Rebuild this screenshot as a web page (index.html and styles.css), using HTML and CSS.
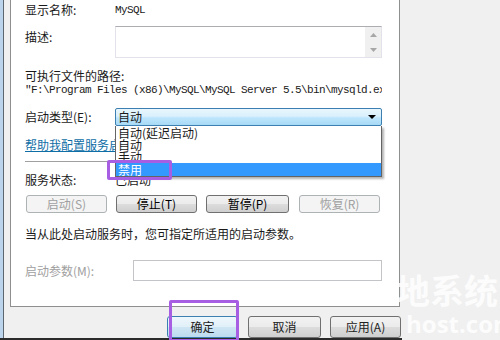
FILE: index.html
```html
<!DOCTYPE html>
<html>
<head>
    <title>MySQL 的属性</title>
    <link rel="stylesheet" href="styles.css">
</head>
<body>
    <div class="screen">
        <div class="main">
            <div class="edge"></div>
            <div class="dialog">
                <div class="panel">
                    <div class="row row-name">
                        <span class="label">显示名称:</span>
                        <span class="mono">MySQL</span>
                    </div>
                    <div class="row row-desc">
                        <span class="label">描述:</span>
                        <div class="textbox">
                            <div class="scroll">
                                <svg width="7" height="4" viewBox="0 0 7 4"><polygon points="0,4 3.5,0 7,4" fill="#a7a7a7"/></svg>
                                <svg width="7" height="4" viewBox="0 0 7 4"><polygon points="0,0 7,0 3.5,4" fill="#a7a7a7"/></svg>
                            </div>
                        </div>
                    </div>
                    <div class="path-label">可执行文件的路径:</div>
                    <div class="path mono">"F:\Program Files (x86)\MySQL\MySQL Server 5.5\bin\mysqld.exe" --defaults-file</div>
                    <div class="row row-type">
                        <span class="label">启动类型(E):</span>
                        <div class="combo">
                            <div class="combo-box">自动<span class="arrow"></span></div>
                            <ul class="combo-list">
                                <li>自动(延迟启动)</li>
                                <li>自动</li>
                                <li>手动</li>
                                <li class="selected">禁用</li>
                            </ul>
                        </div>
                    </div>
                    <a class="help">帮助我配置服务启动选项。</a>
                    <div class="sep"></div>
                    <div class="row row-status">
                        <span class="label">服务状态:</span>
                        <span>已启动</span>
                    </div>
                    <div class="svc-buttons">
                        <button class="btn" disabled>启动(S)</button>
                        <button class="btn">停止(T)</button>
                        <button class="btn btn-wide">暂停(P)</button>
                        <button class="btn" disabled>恢复(R)</button>
                    </div>
                    <p class="hint">当从此处启动服务时，您可指定所适用的启动参数。</p>
                    <div class="row row-param">
                        <span class="label muted">启动参数(M):</span>
                        <div class="param-input"></div>
                    </div>
                    <div class="mark mark-option"></div>
                </div>
                <div class="actions">
                    <button class="btn btn-big btn-default">确定</button>
                    <button class="btn btn-big btn-cancel">取消</button>
                    <button class="btn btn-big">应用(A)</button>
                </div>
            </div>
        </div>
        <div class="taskbar"></div>
        <div class="mark mark-ok"></div>
        <div class="watermark">
            <span class="wm-title">地系统</span>
            <span class="wm-site">host.com</span>
        </div>
    </div>
</body>
</html>
```

FILE: styles.css
```css
body {
    margin: 0;
    background: #f0f0f0;
    font-family: "Noto Sans CJK SC", sans-serif;
    font-size: 12px;
    line-height: 12px;
    color: #1a1a1a;
}

.screen {
    position: relative;
    width: 500px;
    height: 340px;
    overflow: hidden;
    display: flex;
    flex-direction: column;
}
.main {
    display: flex;
    height: 338px;
}
.edge {
    width: 3px;
    background: #bcd4ec;
    border-right: 1px solid #5c6670;
}
.dialog {
    flex: 1;
}
.taskbar {
    width: 402px;
    height: 2px;
    background: #2b2b2b;
}

.panel {
    position: relative;
    box-sizing: border-box;
    width: 390px;
    height: 308px;
    margin: -1px 0 0 6px;
    padding-left: 14px;
    background: #fff;
    border: 1px solid #8e8f8f;
}

.row {
    display: flex;
    align-items: center;
}
.label {
    width: 90px;
    flex: none;
}
.muted {
    color: #a0a0a0;
}
.mono {
    font-family: "Liberation Mono", monospace;
    font-size: 11px;
    letter-spacing: -0.6px;
}

.row-name {
    height: 20px;
}

.row-desc {
    align-items: flex-start;
    margin-top: 6px;
}
.row-desc .label {
    padding-top: 5px;
}
.textbox {
    box-sizing: border-box;
    width: 267px;
    height: 32px;
    border: 1px solid #e2e3ea;
    border-top-color: #abadb3;
    display: flex;
    justify-content: flex-end;
}
.scroll {
    width: 16px;
    background: #f0f0f0;
    display: flex;
    flex-direction: column;
    justify-content: space-around;
    align-items: center;
}

.path-label {
    margin-top: 11px;
    line-height: 14px;
}
.path {
    width: 357px;
    overflow: hidden;
    white-space: nowrap;
    line-height: 14px;
}

.row-type {
    margin-top: 11px;
}
.combo {
    position: relative;
    width: 267px;
}
.combo-box {
    box-sizing: border-box;
    height: 18px;
    padding: 0 5px 0 2px;
    border: 1px solid #3c7fb1;
    border-radius: 2px;
    background: linear-gradient(#eaf6fd, #d9f0fc 45%, #bee6fd 55%, #a7d9f5);
    line-height: 16px;
    display: flex;
    justify-content: space-between;
    align-items: center;
}
.arrow {
    width: 0;
    height: 0;
    border-left: 4px solid transparent;
    border-right: 4px solid transparent;
    border-top: 4px solid #000;
}
.combo-list {
    position: absolute;
    left: 0;
    top: 18px;
    z-index: 2;
    box-sizing: border-box;
    width: 100%;
    margin: 0;
    padding: 1px 0 0;
    list-style: none;
    background: #fff;
    border: 1px solid #646464;
    border-top: none;
    box-shadow: 2px 2px 2px rgba(0,0,0,0.3);
}
.combo-list li {
    height: 12px;
    padding-left: 2px;
    line-height: 12px;
}
.combo-list li.selected {
    height: 13px;
    line-height: 13px;
    background: #3399ff;
    color: #fff;
}

.help {
    display: block;
    margin-top: 13px;
    color: #0f6ea6;
    text-decoration: underline;
    white-space: nowrap;
}
.sep {
    width: 357px;
    height: 1px;
    margin-top: 10px;
    background: #a0a0a0;
}

.row-status {
    margin-top: 12px;
}

.svc-buttons {
    display: flex;
    gap: 9px;
    margin: 9px 0 0 1px;
}
.btn {
    box-sizing: border-box;
    width: 81px;
    height: 18px;
    padding: 0;
    border: 1px solid #707070;
    border-radius: 3px;
    background: linear-gradient(#f2f2f2, #ebebeb 50%, #dddddd 50%, #cfcfcf);
    font: inherit;
    line-height: 16px;
    color: #000;
    text-align: center;
}
.btn:disabled {
    border-color: #adb2b5;
    background: #f4f4f4;
    color: #a0a0a0;
}
.btn-wide {
    width: 83px;
    margin-right: 1px;
}

.hint {
    margin: 15px 0 0;
}

.row-param {
    margin-top: 20px;
}
.row-param .label {
    width: 108px;
}
.param-input {
    box-sizing: border-box;
    width: 249px;
    height: 21px;
    border: 1px solid #c2c4c8;
    background: #fff;
}

.actions {
    display: flex;
    gap: 9px;
    padding: 9px 0 0 163px;
}
.btn-big {
    width: 71px;
    height: 22px;
    line-height: 20px;
    color: #222;
}
.btn-cancel {
    width: 73px;
    margin-left: 1px;
}
.btn-default {
    border-color: #3c7fb1;
    background: linear-gradient(#eef7fc, #e0eff8 50%, #cfe6f4 50%, #bcdcef);
}

.mark {
    position: absolute;
    z-index: 3;
    box-sizing: border-box;
    border: 3px solid #a85ee2;
    border-radius: 2px;
}
.mark-option {
    left: 96px;
    top: 160px;
    width: 65px;
    height: 20px;
}
.mark-ok {
    left: 169px;
    top: 300px;
    width: 70px;
    height: 42px;
}

.watermark {
    position: absolute;
    left: 396px;
    top: 270px;
    width: 110px;
    display: flex;
    flex-direction: column;
    color: rgba(255,255,255,0.85);
    font-weight: bold;
}
.wm-title {
    font-size: 34px;
    line-height: 40px;
}
.wm-site {
    padding-left: 10px;
    font-family: "Open Sans", sans-serif;
    font-size: 24px;
    line-height: 28px;
}
```
